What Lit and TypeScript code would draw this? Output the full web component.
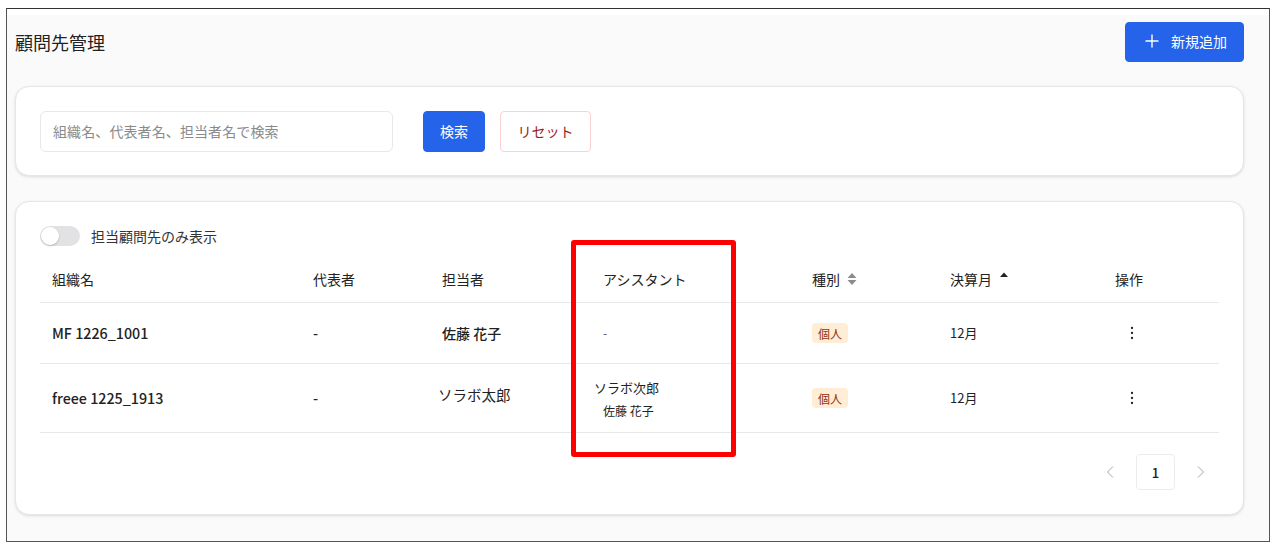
import { LitElement, html, css } from 'lit';
import { customElement } from 'lit/decorators.js';

interface Client {
  name: string;
  rep: string;
  owner: string;
  shiftedOwner?: boolean;
  assistants: string[];
  kind: string;
  month: string;
}

const clients: Client[] = [
  { name: 'MF 1226_1001', rep: '-', owner: '佐藤 花子', assistants: [], kind: '個人', month: '12月' },
  {
    name: 'freee 1225_1913',
    rep: '-',
    owner: 'ソラボ太郎',
    shiftedOwner: true,
    assistants: ['ソラボ次郎', '佐藤 花子'],
    kind: '個人',
    month: '12月',
  },
];

const kebab = html`<svg width="24" height="24" viewBox="0 0 24 24" fill="#222">
  <circle cx="12" cy="7" r="1.15"></circle>
  <circle cx="12" cy="12" r="1.15"></circle>
  <circle cx="12" cy="17" r="1.15"></circle>
</svg>`;

@customElement('app-root')
export class AppRoot extends LitElement {
  static styles = css`
    :host {
      display: block;
      position: relative;
      width: 1280px;
      height: 557px;
      box-sizing: border-box;
      padding: 8px 10px 15px 6px;
      background: #fff;
      overflow: hidden;
      font-family: 'Noto Sans CJK JP', 'Noto Sans', sans-serif;
      color: #222;
    }

    .frame {
      height: 100%;
      box-sizing: border-box;
      border: 1px solid #555;
      border-top-color: #333;
      background: linear-gradient(#fff 6px, #fafafa 6px);
      padding: 13px 25px 0 8px;
      display: flex;
      flex-direction: column;
    }

    .head {
      display: flex;
      justify-content: space-between;
      align-items: center;
      height: 40px;
      margin-bottom: 24px;
    }

    h1 {
      margin: 0;
      font-size: 18px;
      font-weight: 400;
      color: #222;
    }

    button {
      font-family: inherit;
      box-sizing: border-box;
      border-radius: 4px;
      font-size: 14px;
      line-height: 20px;
      cursor: pointer;
      padding: 0 0 2px;
    }

    .primary {
      background: #2563eb;
      border: 1px solid #2563eb;
      color: #fff;
    }

    .add {
      width: 119px;
      height: 40px;
      padding-left: 2px;
      display: flex;
      align-items: center;
      justify-content: center;
      gap: 11px;
    }

    .card {
      background: #fff;
      border: 1px solid #e6e6e6;
      border-radius: 14px;
      box-shadow: 0 1px 3px rgba(0, 0, 0, 0.12);
      box-sizing: border-box;
    }

    .search {
      height: 90px;
      padding: 24px;
      display: flex;
      gap: 15px;
      margin-bottom: 25px;
    }

    .input {
      width: 353px;
      height: 41px;
      box-sizing: border-box;
      border: 1px solid #e8e8e8;
      border-radius: 6px;
      padding: 0 12px 2px;
      margin-right: 15px;
      display: flex;
      align-items: center;
      font-size: 14px;
      letter-spacing: 0.1px;
      color: #8a8a8a;
    }

    .go {
      width: 62px;
      height: 41px;
    }

    .reset {
      width: 91px;
      height: 41px;
      background: #fff;
      border: 1px solid #fbd0d0;
      color: #991b1b;
    }

    .list {
      height: 314px;
      padding: 24px 24px 0;
    }

    .filter {
      display: flex;
      align-items: center;
      gap: 11px;
      height: 20px;
      margin-bottom: 1px;
      font-size: 14px;
      color: #333;
    }

    .toggle {
      width: 40px;
      height: 20px;
      border-radius: 10px;
      background: #e2e2e4;
      position: relative;
    }

    .toggle::after {
      content: '';
      position: absolute;
      left: 1px;
      top: 1px;
      width: 18px;
      height: 18px;
      border-radius: 50%;
      background: #fff;
      box-shadow: 0 1px 2px rgba(0, 0, 0, 0.2);
    }

    .row {
      display: grid;
      grid-template-columns: 261px 129px 161px 209px 138px 165px 116px;
      align-items: center;
      border-bottom: 1px solid #e8e8e8;
      font-size: 14px;
    }

    .row > div {
      padding-left: 12px;
      display: flex;
      align-items: center;
      min-width: 0;
    }

    .row.header {
      height: 56px;
      padding-top: 9px;
      box-sizing: border-box;
      font-weight: 400;
    }

    .row.one {
      height: 60px;
    }

    .row.two {
      height: 68px;
    }

    .name {
      font-weight: 500;
      font-size: 14.3px;
      margin-top: -1px;
    }

    .owner {
      font-weight: 500;
      margin-top: -1px;
    }

    .shifted {
      margin: -6px 0 0 -4px;
      font-weight: 400;
      font-size: 14.5px;
    }

    .updown {
      margin-left: 7px;
    }

    .caret {
      margin: -8px 0 0 6px;
    }

    .stack {
      flex-direction: column;
      align-items: flex-start !important;
      gap: 5px;
      font-size: 12px;
      margin-top: 0;
    }

    .first {
      margin-left: -9px;
      font-size: 13px;
    }

    .none {
      font-size: 12px;
      color: #555;
      margin-top: -1px;
    }

    .badge {
      width: 36px;
      height: 20px;
      border-radius: 4px;
      background: #ffedd5;
      color: #8f3110;
      font-size: 12px;
      display: flex;
      align-items: center;
      justify-content: center;
    }

    .month {
      font-size: 13px;
      margin-top: -1px;
    }

    .pager {
      display: flex;
      justify-content: flex-end;
      align-items: center;
      gap: 21px;
      margin-top: 21px;
      padding-right: 13px;
    }

    .act {
      padding-left: 17px !important;
    }

    .page {
      width: 39px;
      height: 36px;
      box-sizing: border-box;
      border: 1px solid #ececec;
      border-radius: 4px;
      display: flex;
      align-items: center;
      justify-content: center;
      font-size: 13px;
      font-weight: 500;
    }

    .mark {
      position: absolute;
      left: 571px;
      top: 240px;
      width: 165px;
      height: 217px;
      box-sizing: border-box;
      border: 5px solid #fe0000;
      border-radius: 3px;
    }
  `;

  render() {
    return html`
      <div class="frame">
        <div class="head">
          <h1>顧問先管理</h1>
          <button class="primary add">
            <svg width="16" height="16" viewBox="0 0 16 16" stroke="#fff" stroke-width="1.4" fill="none">
              <path d="M8 1.5v13M1.5 8h13"></path>
            </svg>
            <span>新規追加</span>
          </button>
        </div>

        <div class="card search">
          <div class="input">組織名、代表者名、担当者名で検索</div>
          <button class="primary go">検索</button>
          <button class="reset">リセット</button>
        </div>

        <div class="card list">
          <div class="filter">
            <span class="toggle"></span>
            <span>担当顧問先のみ表示</span>
          </div>

          <div class="row header">
            <div>組織名</div>
            <div>代表者</div>
            <div>担当者</div>
            <div>アシスタント</div>
            <div>
              種別
              <svg class="updown" width="10" height="14" viewBox="0 0 10 14" fill="#8c8c8c">
                <path d="M5 1l4.5 5h-9zM5 13L.5 8h9z"></path>
              </svg>
            </div>
            <div>
              決算月
              <svg class="caret" width="12" height="8" viewBox="0 0 12 8" fill="#222">
                <path d="M6 1.5l4 4.5H2z"></path>
              </svg>
            </div>
            <div>操作</div>
          </div>

          ${clients.map((c, i) => html`
            <div class="row ${i === 0 ? 'one' : 'two'}">
              <div class="name">${c.name}</div>
              <div class="name">${c.rep}</div>
              <div class="owner"><span class=${c.shiftedOwner ? 'shifted' : ''}>${c.owner}</span></div>
              ${c.assistants.length
                ? html`<div class="stack">
                    <span class="first">${c.assistants[0]}</span>
                    <span>${c.assistants[1]}</span>
                  </div>`
                : html`<div class="none">-</div>`}
              <div><span class="badge">${c.kind}</span></div>
              <div class="month">${c.month}</div>
              <div class="act">${kebab}</div>
            </div>
          `)}

          <div class="pager">
            <svg width="10" height="14" viewBox="0 0 10 14" stroke="#a8a8a8" fill="none">
              <path d="M8 1.5L2.5 7 8 12.5"></path>
            </svg>
            <div class="page">1</div>
            <svg width="10" height="14" viewBox="0 0 10 14" stroke="#a8a8a8" fill="none">
              <path d="M2 1.5L7.5 7 2 12.5"></path>
            </svg>
          </div>
        </div>
      </div>
      <div class="mark"></div>
    `;
  }
}
